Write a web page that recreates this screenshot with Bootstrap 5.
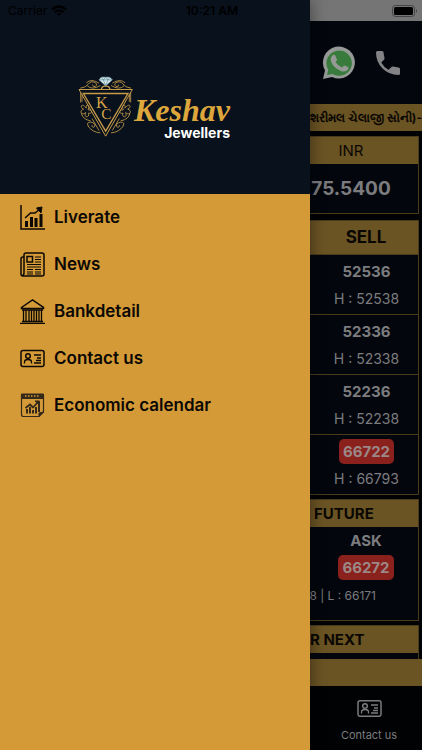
<!DOCTYPE html>
<html lang="en">
<head>
<meta charset="utf-8">
<meta name="viewport" content="width=device-width, initial-scale=1">
<title>Keshav Jewellers</title>
<link href="https://cdn.jsdelivr.net/npm/bootstrap@5.3.0/dist/css/bootstrap.min.css" rel="stylesheet">
<style>
  :root { --gold: #d49a37; --navy: #08111c; --dim-gold: #6b5424; --dim-navy: #03070d; --line: #4a3b1b; --dim: #7c7c7f; }
  body { font-family: Inter, "Noto Sans", sans-serif; background: #010203; color: #000; }
  svg { display: block; flex: none; }
  .drawer { width: 310px; background: var(--gold); z-index: 2; box-shadow: 0 0 16px rgba(0,0,0,.45); }
  .drawer-head { background: var(--navy); height: 194px; }
  .status { height: 21px; font-size: 12px; line-height: 21px; color: #000; }
  .clock { padding-right: 72px; }
  .brand { padding: 54px 0 0 78px; }
  .brand-text { padding-top: 18px; }
  .brand-name { font: italic bold 32px/34px "Liberation Serif", serif; color: #dda73c; }
  .brand-sub { font-size: 14px; line-height: 12px; color: #fff; }
  .menu-link { font-size: 17px; line-height: 23px; padding: 11px 20px; gap: 9px; color: #0b0805; }
  .menu-link svg { width: 25px; height: 25px; }
  .app-status { background: #757575; }
  .app-head { height: 83px; background: var(--dim-navy); gap: 20px; padding-left: 12px; }
  .ticker { background: var(--dim-gold); height: 27px; line-height: 27px; color: #0a0702; }
  .notice { font-size: 12px; margin-bottom: 5px; }
  .box { border: 1px solid var(--line); border-left: 0; background: var(--dim-navy); color: var(--dim); margin: 0 3px 4px 0; }
  .box-title { background: var(--dim-gold); color: #0a0702; font-size: 15px; line-height: 27px; }
  .inr { padding-right: 26px; }
  .usd { font-size: 19px; line-height: 49px; }
  .box-usd { margin-bottom: 6px; }
  .sell { font-size: 17px; line-height: 33px; }
  .rate { padding: 2px 0 2px 5px; border-top: 1px solid var(--line); }
  .price { font-size: 15px; line-height: 29px; }
  .quote { line-height: 27px; }
  .pill { background: #8b211d; color: #9b8886; border-radius: 5px; padding: 0 4px; line-height: 25px; }
  .high { font-size: 14px; line-height: 26px; }
  .low { font-size: 12px; line-height: 30px; padding: 0 42px 9px 0; }
  .tab-link { font-size: 11px; line-height: 16px; color: var(--dim); padding: 14px 0 7px 6px; gap: 10px; }
</style>
</head>
<body>
<div class="d-flex min-vh-100 overflow-hidden">
  <nav class="drawer flex-shrink-0" aria-label="Main menu">
    <div class="drawer-head">
      <div class="status d-flex justify-content-between ps-2">
        <span class="d-flex align-items-center gap-1">Carrier
          <svg width="16" height="12" viewBox="0 0 16 12" fill="none" stroke="#000" stroke-width="2.3"><path d="M1 4.5Q8-1.5 15 4.5M3.600 7.200Q8 3.500 12.400 7.200"/><path d="M8 11 5.800 8.800Q8 7 10.200 8.800Z" fill="#000" stroke="none"/></svg>
        </span>
        <span class="clock fw-semibold">10:21 AM</span>
      </div>
      <div class="brand d-flex">
        <svg width="56" height="63" viewBox="24 30 168 188" fill="none" stroke="#c89b49" stroke-width="2.500">
          <path d="M27 73H187L107 213Z" stroke-width="3"/>
          <path d="M40 85H174L107 198Z" stroke-width="4"/>
          <path d="M31 69Q48 67 55 57Q63 45 77 53Q84 60 76 64Q67 66 68 58M52 62Q66 76 91 61M49 53Q64 39 87 54"/>
          <path d="M183 69Q166 67 159 57Q151 45 137 53Q130 60 138 64Q147 66 146 58M162 62Q148 76 123 61M165 53Q150 39 127 54"/>
          <path d="M32 82V112M36 88V110M182 82V112M178 88V110"/>
          <path d="M49 129C34 110 28 127 41 132C24 137 37 153 47 142C40 160 61 158 55 144C70 147 67 133 54 134C62 119 46 113 49 129ZM34 144Q38 163 62 167M66 160L87 196"/>
          <path d="M165 129C180 110 186 127 173 132C190 137 177 153 167 142C174 160 153 158 159 144C144 147 147 133 160 134C152 119 168 113 165 129ZM180 144Q176 163 152 167M148 160L127 196"/>
          <path d="M55 182Q48 171 62 171Q78 174 74 184Q66 190 66 180M53 181Q67 202 91 203M159 182Q166 171 152 171Q136 174 140 184Q148 190 148 180M161 181Q147 202 123 203"/>
          <path d="M94 74Q94 63 107 62Q120 63 120 74" stroke-width="4"/>
          <path d="M94 36H119L127 44 107 62 87 44Z" fill="#d8eef2" stroke="#9fbfc7" stroke-width="1.500"/>
          <path d="M87 44H127M94 36 100 44 107 37 114 44 119 36M100 44 107 62 114 44" stroke="#587e89" stroke-width="2"/>
          <g fill="#d3a247" stroke="none" font-family="Liberation Serif, serif"><text x="78" y="130" font-size="48">K</text><text x="94" y="163" font-size="46">C</text></g>
        </svg>
        <div class="brand-text text-end">
          <div class="brand-name">Keshav</div>
          <div class="brand-sub fw-bold">Jewellers</div>
        </div>
      </div>
    </div>
    <div class="d-flex flex-column">
      <a href="#liverate" class="menu-link d-flex align-items-center fw-semibold text-decoration-none">
        <svg viewBox="0 0 25 25" fill="none" stroke="currentColor"><path d="M1 0V24H25" stroke-width="1.500"/><path d="M6.500 22V16M11.500 22V12M16 22V13M21 22V9" stroke-width="3"/><path d="M5 13 10.500 8H15L20 4" stroke-width="1.500"/><path d="M16.500 3 22 2 21 8Z" fill="currentColor"/></svg>
        Liverate</a>
      <a href="#news" class="menu-link d-flex align-items-center fw-semibold text-decoration-none">
        <svg viewBox="0 0 25 25" fill="none" stroke="currentColor" stroke-width="1.500"><path d="M4 21V3Q4 1 6 1H22Q24 1 24 3V22Q24 24 22 24H3Q1 24 1 22V7Q1 5 3 5H4M4 5V21Q4 23 2.500 23"/><path d="M7 4.500H12.500V10H7Z"/><path d="M15 5H21M15 7.500H21M15 10H21M7 12.500H21M7 15H21M7 17.500H13M15 17.500H21M7 20H13M15 20H21M7 22H13M15 22H21" stroke-width="1"/></svg>
        News</a>
      <a href="#bank" class="menu-link d-flex align-items-center fw-semibold text-decoration-none">
        <svg viewBox="0 0 25 25" fill="none" stroke="currentColor"><path d="M1.500 8.500 12.500 1 23.500 8.500V9.500H1.500Z" stroke-width="1.500"/><path d="M2 11H23M2 22.500H23M0 24.500H25" stroke-width="1.500"/><path d="M3.500 11V22M6 11V22M9 11V22M11.500 11V22M14 11V22M16.500 11V22M19 11V22M21.500 11V22" stroke-width="1.300"/></svg>
        Bankdetail</a>
      <a href="#contact" class="menu-link d-flex align-items-center fw-semibold text-decoration-none">
        <svg viewBox="0 0 25 25" fill="none" stroke="currentColor" stroke-width="1.500"><rect x="1" y="4.500" width="23" height="16" rx="2"/><circle cx="8" cy="10" r="2.300"/><path d="M4.500 17.500V16Q4.500 13.500 8 13.500T11.500 16V17.500M14 9H21M17 12H21M16 14.500H21M14 17H21" stroke-width="1.300"/></svg>
        Contact us</a>
      <a href="#calendar" class="menu-link d-flex align-items-center fw-semibold text-decoration-none">
        <svg viewBox="0 0 25 25" fill="none" stroke="#34291a"><path d="M1.500 2H23.500V19L19 23.500H3.500Q1.500 23.500 1.500 21.500Z" stroke-width="1.200"/><path d="M1.500 1H23.500V5.500H1.500Z" fill="#34291a"/><path d="M5 3H20" stroke="#d49a37" stroke-width="1.500" stroke-dasharray="1.500 1.500"/><path d="M19 23.500V20L23.500 19Z" fill="#34291a"/><path d="M7 20.500V16M10 20.500V14M13 20.500V17M16 20.500V14M19 19V10" stroke-width="2"/><path d="M5.500 15 10 11.500 13 14.500 18 9" stroke-width="1.800"/><path d="M15 8H19.500V12Z" fill="#34291a"/></svg>
        Economic calendar</a>
    </div>
  </nav>

  <main class="flex-grow-1 d-flex flex-column overflow-hidden">
    <div class="status app-status d-flex justify-content-end align-items-center pe-1">
      <svg width="26" height="12" viewBox="0 0 26 12"><rect x=".5" y=".5" width="22" height="11" rx="3" fill="none" stroke="#444"/><rect x="2" y="2" width="19" height="8" rx="1.500"/><path d="M24 4Q26 6 24 8Z" fill="#444"/></svg>
    </div>
    <header class="app-head d-flex align-items-center">
      <button type="button" class="btn p-0 border-0" aria-label="WhatsApp">
        <svg width="34" height="34" viewBox="0 0 34 34"><path d="M1 33 3 24.500A16 16 0 1 1 10 31Z" fill="#969a96"/><path d="M5 29 6.300 23.800A12.700 12.700 0 1 1 10.500 28Z" fill="#397b3c"/><path d="M10.500 9.500Q12.500 8 13.500 10L15 13.500Q15 14.500 13.500 16Q16 20 20 21.500L22 19.500Q23 19 26 21Q27 21.500 26 23.500Q23.500 26.500 19 25Q11.500 22 9 15.500Q8 12 10.500 9.500Z" fill="#969a96"/></svg>
      </button>
      <button type="button" class="btn p-0 border-0" aria-label="Call">
        <svg width="24" height="24" viewBox="0 0 24 24"><path d="M1.500 0H6Q7.500 0 7.600 1.500Q7.700 4.500 8.500 6.800Q8.700 8 8 8.800L5.200 11.500Q8 16.500 12.500 18.800L15.500 16Q16.200 15.300 17.200 15.500Q19.500 16.300 22.500 16.400Q24 16.500 24 18V22.500Q24 24 22.500 24Q13 24 6.500 17.500Q0 11 0 1.500Q0 0 1.500 0Z" fill="#838385"/></svg>
      </button>
    </header>
    <div class="ticker notice d-flex justify-content-end text-nowrap overflow-hidden fw-bold" lang="gu">કેશરીમલ ચેલાજી સોની)-</div>

    <section class="box box-usd text-center">
      <div class="box-title inr">INR</div>
      <div class="usd inr fw-bold">75.5400</div>
    </section>

    <section class="box text-center">
      <div class="box-title sell fw-bold ps-1">SELL</div>
      <div class="rate"><div class="price fw-bold">52536</div><div class="high">H : 52538</div></div>
      <div class="rate"><div class="price fw-bold">52336</div><div class="high">H : 52338</div></div>
      <div class="rate"><div class="price fw-bold">52236</div><div class="high">H : 52238</div></div>
      <div class="rate"><div class="price fw-bold"><span class="pill d-inline-block">66722</span></div><div class="high">H : 66793</div></div>
    </section>

    <section class="box">
      <div class="box-title fw-bold ps-1">FUTURE</div>
      <div class="text-center ps-1">
        <div class="price quote fw-bold">ASK</div>
        <div class="price quote fw-bold"><span class="pill d-inline-block">66272</span></div>
      </div>
      <div class="low d-flex justify-content-end text-nowrap overflow-hidden">8 | L : 66171</div>
    </section>

    <section class="box border-bottom-0 mb-0 flex-grow-1">
      <div class="box-title fw-bold">R NEXT</div>
    </section>
    <div class="ticker"></div>
    <a href="#contact" class="tab-link d-flex flex-column align-items-center text-decoration-none">
      <svg width="25" height="17" viewBox="0 4 25 17" fill="none" stroke="currentColor" stroke-width="1.500"><rect x="1" y="4.800" width="23" height="15.500" rx="2"/><circle cx="8" cy="10" r="2.300"/><path d="M4.500 17.500V16Q4.500 13.500 8 13.500T11.500 16V17.500M14 9H21M17 12H21M16 14.500H21M14 17H21" stroke-width="1.300"/></svg>
      Contact us</a>
  </main>
</div>
</body>
</html>
